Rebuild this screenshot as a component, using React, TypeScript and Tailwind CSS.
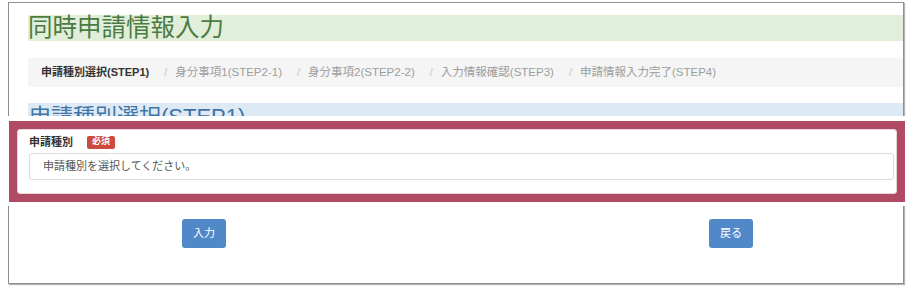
const font = { fontFamily: '"Liberation Sans", "Noto Sans CJK JP", sans-serif' };

const steps = [
  "身分事項1(STEP2-1)",
  "身分事項2(STEP2-2)",
  "入力情報確認(STEP3)",
  "申請情報入力完了(STEP4)",
];

function Button({ label }: { label: string }) {
  return (
    <button className="h-[29px] w-[44px] rounded-[3px] bg-[#5088c8] text-[11px] text-white">
      {label}
    </button>
  );
}

export default function App() {
  return (
    <div className="relative h-[296px] w-[916px] overflow-hidden bg-white" style={font}>
      {/* window frame */}
      <div className="ml-[8px] mt-[2px] h-[282px] w-[896px] border border-[#8e8e8e] bg-white pl-[19px] shadow-[1px_1px_1px_#b5b5b5]">
        <div className="mt-[12px] flex h-[26px] items-center bg-[#e1eed9] text-[24.5px] leading-none text-[#4b7b42]">
          同時申請情報入力
        </div>

        <nav className="mt-[17px] flex h-[29px] items-center rounded-[3px] bg-[#f5f5f5] pl-[13px] text-[11px]">
          <span className="font-bold text-[#333]">申請種別選択(STEP1)</span>
          {steps.map((s) => (
            <span key={s} className="flex items-center text-[11.5px] text-[#9d9d9d]">
              <span className="ml-[15px] mr-[8px] text-[11px] text-[#c8c8c8]">/</span>
              {s}
            </span>
          ))}
        </nav>

        <div className="mt-[16px] flex h-[32px] items-start bg-[#dde9f4] pl-px text-[22px] leading-[28px] text-[#3f74a5]">
          申請種別選択(STEP1)
        </div>

        <div className="mt-[84px] flex">
          <div className="ml-[154px]">
            <Button label="入力" />
          </div>
          <div className="ml-[483px]">
            <Button label="戻る" />
          </div>
        </div>
      </div>

      {/* highlighted cut-out */}
      <div className="absolute left-[4px] top-[116px] h-[90px] w-[905px] bg-white">
        <div className="ml-[5px] mt-[5px] h-[81px] w-[896px] border-[8px] border-[#b14b65] bg-[#b14b65]">
          <div className="h-full rounded-[3px] border border-[#e6d6da] bg-white pl-[11px] pr-[2px] pt-[5px]">
            <div className="flex h-[14px] items-center gap-[14px]">
              <span className="text-[11px] font-bold text-[#333]">申請種別</span>
              <span className="flex h-[13px] items-center rounded-[2px] bg-[#cc4a3e] px-[5px] text-[9px] font-bold text-white">
                必須
              </span>
            </div>
            <div className="mt-[4px] flex h-[27px] items-center rounded-[3px] border border-[#dcdcdc] pl-[13px] text-[11px] text-[#555]">
              申請種別を選択してください。
            </div>
          </div>
        </div>
      </div>
    </div>
  );
}
